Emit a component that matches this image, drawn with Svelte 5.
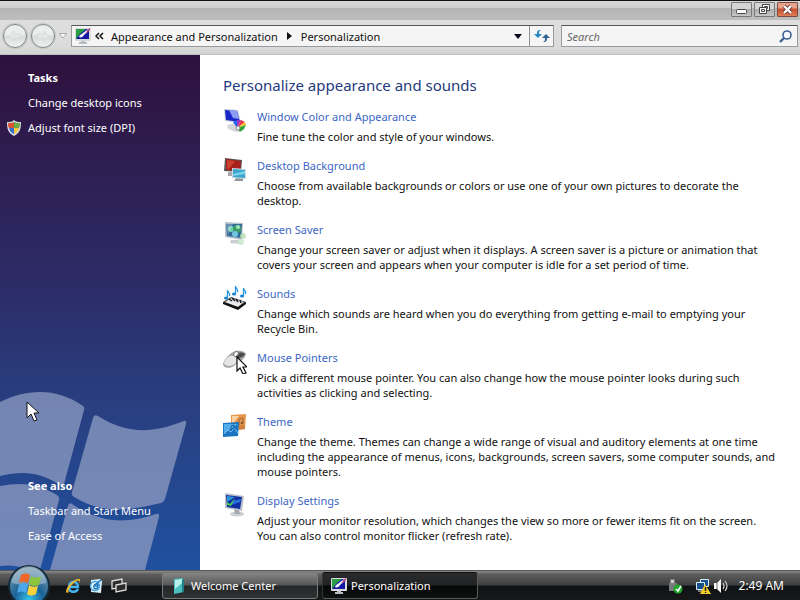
<script lang="ts">
  interface Item {
    icon: string;
    title: string;
    text: string;
  }

  const items: Item[] = [
    { icon: 'color', title: 'Window Color and Appearance', text: 'Fine tune the color and style of your windows.' },
    { icon: 'desktop', title: 'Desktop Background', text: 'Choose from available backgrounds or colors or use one of your own pictures to decorate the desktop.' },
    { icon: 'saver', title: 'Screen Saver', text: 'Change your screen saver or adjust when it displays. A screen saver is a picture or animation that covers your screen and appears when your computer is idle for a set period of time.' },
    { icon: 'sounds', title: 'Sounds', text: 'Change which sounds are heard when you do everything from getting e-mail to emptying your Recycle Bin.' },
    { icon: 'mouse', title: 'Mouse Pointers', text: 'Pick a different mouse pointer. You can also change how the mouse pointer looks during such activities as clicking and selecting.' },
    { icon: 'theme', title: 'Theme', text: 'Change the theme. Themes can change a wide range of visual and auditory elements at one time including the appearance of menus, icons, backgrounds, screen savers, some computer sounds, and mouse pointers.' },
    { icon: 'display', title: 'Display Settings', text: 'Adjust your monitor resolution, which changes the view so more or fewer items fit on the screen. You can also control monitor flicker (refresh rate).' },
  ];

  let search = $state('');
</script>

{#snippet monitor()}
  <svg width="16" height="16" viewBox="0 0 16 16">
    <path d="M6 12h4v2h2v2H4v-2h2z" fill="#b9bcc0" />
    <rect x="0" y="0" width="16" height="13" rx="1" fill="#d9dbde" />
    <rect x="1" y="1" width="13" height="10" fill="#1519a0" />
    <path d="M1 1h10L5 6 1 11z" fill="#2c9c45" />
    <path d="M4 9c1-3 2-2 4-4l5-4 1 1-5 5c-1 2-3 3-5 2z" fill="#f4f4ff" />
    <path d="M12 2l3-2v2l-4 4z" fill="#b04488" />
  </svg>
{/snippet}

{#snippet pointer()}
  <path d="M0 0v16l4-4 3 7 3-1-3-7h5z" fill="#fff" stroke="#111" stroke-width="1" stroke-linejoin="round" />
{/snippet}

{#snippet note(x: number, y: number)}
  <g transform="translate({x} {y})">
    <ellipse cx="2" cy="8" rx="2" ry="1.6" fill="#167fd0" />
    <path d="M3.5 8V0c0 3 3 2 2 6" fill="none" stroke="#2495e0" stroke-width="1.3" />
  </g>
{/snippet}

{#snippet itemIcon(name: string)}
  <svg class="item-icon" width="24" height="24" viewBox="0 0 24 24" aria-hidden="true">
    {#if name === 'color'}
      <path d="M1 0l14 1 3 13-16-2z" fill="#c5cbd8" />
      <path d="M2 1l12 1 3 11-14-2z" fill="#1928c8" />
      <path d="M6 1l8 1 2 8-6-1z" fill="#8d9cf4" />
      <path d="M4 16l8-2 6 8-5 1-8-3z" fill="#d5d7da" />
      <path d="M14 19l-4-6 4-2z" fill="#2467e8" />
      <path d="M14 19l0-8 4 0z" fill="#9c34c8" />
      <path d="M14 19l4-8 4 2z" fill="#e83450" />
      <path d="M14 19l8-6 1 3z" fill="#f5c22c" />
      <path d="M14 19l9-3-2 4-4 3z" fill="#29a538" />
      <circle cx="15" cy="19" r="2" fill="#fff" stroke="#888" />
    {:else if name === 'desktop'}
      <path d="M5 14h6v4H5z" fill="#a7a9ac" />
      <path d="M2 0l17 2-1 12-17-1z" fill="#5b5657" />
      <path d="M3 1l15 2-1 10-14-1z" fill="#a61f1b" />
      <path d="M4 2l8 1-6 8-2 0z" fill="#c9402c" />
      <path d="M13 20h7v3h-9z" fill="#8e999f" />
      <path d="M9 10l14 1v10l-14-1z" fill="#d2dbe0" />
      <path d="M10 11l12 1v8l-12-1z" fill="#3aa5cf" />
      <path d="M10 16l12-3v3l-12 2z" fill="#79d3e9" />
    {:else if name === 'saver'}
      <path d="M8 18l9 0 2 4-12-1z" fill="#c7cdd0" />
      <path d="M2 0l18 1-1 17-17-3z" fill="#b6c1c9" />
      <path d="M3 2l16 0-1 14-14-2z" fill="#356b9b" />
      <circle cx="8" cy="7" r="3" fill="#6ed1b0" />
      <circle cx="14" cy="7" r="4" fill="#3c9c67" />
      <circle cx="15" cy="5" r="2" fill="#9eeaba" />
      <circle cx="12" cy="12" r="3" fill="#72c7e0" />
      <circle cx="20" cy="14" r="3" fill="#b7dfb4" opacity=".8" />
      <circle cx="18" cy="20" r="3" fill="#cbead2" opacity=".9" />
      <path d="M3 2h7L5 13z" fill="#fff" opacity=".25" />
    {:else if name === 'sounds'}
      {@render note(1, 4)}
      {@render note(9, 0)}
      {@render note(17, 2)}
      <path d="M0 16l8-5 15 5-8 7z" fill="#33373b" />
      <path d="M2 16l6-4 13 4-6 5z" fill="#e9eaec" />
      <path d="M6 13l3 2m0-3l3 3m1-2l2 3m2-2l1 3" stroke="#17191b" stroke-width="1.5" />
      <path d="M0 16l15 5 8-5v2l-8 6-15-6z" fill="#111" />
    {:else if name === 'mouse'}
      <path d="M0 14C2 8 7 3 12 1c5-1 10 0 11 3-1 6-9 9-12 12-4 3-11 2-11-2z" fill="#a2a4a6" />
      <path d="M1 13c2-6 6-8 10-7 3 1 4 4 2 7-4 4-11 4-12 0z" fill="#e6e6e7" />
      <path d="M12 5c3-3 7-3 10-1-1 3-4 3-7 5z" fill="#4a4b4d" />
      <path d="M10 5l3-4 3 2-3 4z" fill="#f3f3f3" stroke="#777" />
      <g transform="translate(14 7)"><path d="M0 0v14l3-3 3 6 3-1-3-6h4z" fill="#fff" stroke="#111" stroke-width="1.2" /></g>
    {:else if name === 'theme'}
      <path d="M8 1l15-1-1 15-14 1z" fill="#e79548" />
      <path d="M9 2h7L9 11z" fill="#ffd3a1" />
      <path d="M16 11V5l4-1v5" fill="none" stroke="#a06a3a" />
      <circle cx="15" cy="11" r="1.3" fill="#7d5a45" />
      <circle cx="19" cy="9" r="1.3" fill="#7d5a45" />
      <path d="M0 9l16-1-1 14-15 1z" fill="#1974c2" />
      <path d="M1 10h14L1 19z" fill="#52aeea" />
      <path d="M1 20l4-4 3 2 3-4 4 5" fill="none" stroke="#7fc8f2" />
      <path d="M8 17v-5l3-1v5" fill="none" stroke="#1a5f9f" />
      <path d="M16 12l6-1v4l-6 1z" fill="#cf8040" />
    {:else}
      <ellipse cx="14" cy="21" rx="7" ry="2.5" fill="#cdd0d3" />
      <path d="M11 16l5 1 1 4-5 0z" fill="#a5a9ae" />
      <path d="M2 0l19 3-2 15-17-3z" fill="#b9c0c9" />
      <path d="M3 2l16 2-2 12-13-2z" fill="#102fa0" />
      <path d="M4 3l8 1-8 5z" fill="#2f92dc" />
      <path d="M9 8l9-2-1 3-9 3z" fill="#2b72e0" />
      <path d="M4 9l3 2 5-6-4 8-4-1z" fill="#50ce4b" />
    {/if}
  </svg>
{/snippet}

<div class="screen">
  <header class="titlebar">
    <button class="win-btn" aria-label="Minimize">
      <svg width="19" height="13"><rect x="4.5" y="6.5" width="10" height="4" rx="1" fill="#fff" stroke="#444" /></svg>
    </button>
    <button class="win-btn" aria-label="Restore">
      <svg width="19" height="13">
        <g fill="#fff" stroke="#444"><path d="M7.5 1.5h7v6h-7z" /><path d="M9.5 3.5h3v2h-3z" /><path d="M4.5 4.5h7v6h-7z" /><path d="M6.5 6.5h3v2h-3z" /></g>
      </svg>
    </button>
    <button class="win-btn close" aria-label="Close">
      <svg width="19" height="13">
        <path d="M6 3l7 7M13 3l-7 7" stroke="#673c3c" stroke-width="4" />
        <path d="M6 3l7 7M13 3l-7 7" stroke="#fff" stroke-width="2.4" />
      </svg>
    </button>
  </header>

  <nav class="toolbar">
    <div class="travel">
      <button class="round" aria-label="Back"><svg width="14" height="12"><path d="M6 1L1 6l5 5V8h7V4H6z" fill="#e4e7e7" stroke="#d7dada" /></svg></button>
      <button class="round" aria-label="Forward"><svg width="14" height="12"><path d="M8 1l5 5-5 5V8H1V4h7z" fill="#e4e7e7" stroke="#d7dada" /></svg></button>
      <button class="recent" aria-label="Recent pages"><svg width="8" height="6"><path d="M0.5 0.5h7L4 5z" fill="#fff" stroke="#aaa" /></svg></button>
    </div>
    <div class="address">
      {@render monitor()}
      <button class="crumb-arrow" aria-label="Previous locations">
        <svg width="9" height="8"><path d="M4 1L1 4l3 3M8 1L5 4l3 3" fill="none" stroke="#111" stroke-width="1.5" /></svg>
      </button>
      <a href="#appearance">Appearance and Personalization</a>
      <svg class="sep" width="5" height="8"><path d="M0 0l5 4-5 4z" fill="#111" /></svg>
      <a href="#personalization">Personalization</a>
      <button class="drop" aria-label="Address history"><svg width="8" height="5"><path d="M0 0h8L4 5z" fill="#050520" /></svg></button>
      <button class="refresh" aria-label="Refresh">
        <svg width="16" height="14" viewBox="0 0 16 14">
          <path d="M7 1C3 1 3 3 3 5H0l4 4 4-4H5c0-2 0-3 2-4z" fill="#2488c4" />
          <path d="M9 13c4 0 4-2 4-4h3l-4-4-4 4h3c0 2 0 3-2 4z" fill="#2f6295" />
        </svg>
      </button>
    </div>
    <label class="search">
      <input type="text" placeholder="Search" aria-label="Search" bind:value={search} />
      <svg width="13" height="13"><circle cx="8" cy="5" r="4" fill="#f4f8fc" stroke="#3c5f94" stroke-width="1.6" /><path d="M5 8l-4 4" stroke="#3c5f94" stroke-width="2.4" /></svg>
    </label>
  </nav>

  <div class="content">
    <aside class="sidebar">
      <svg class="flag" width="200" height="180" viewBox="0 390 200 180" aria-hidden="true">
        <g fill="#8494bd" fill-opacity=".83">
          <path d="M0 402C28 388 58 388 83 406q2 1 1 4L64 484q-1 3-4 1C39 471 21 471 0 476z" />
          <path d="M98 416C128 435 153 433 184 421q3-1 2 3L165 499q-1 3-4 4C128 511 102 514 74 497q-3-2-2-5L93 418q1-4 5-2z" />
          <path d="M0 486C21 482 37 483 57 495q3 2 2 5L40 570H27C17 565 9 565 0 566z" />
          <path d="M72 504C98 522 125 525 156 514q4-1 3 3L145 570H50L68 506q1-4 4-2z" />
        </g>
      </svg>
      <div class="links">
        <h2>Tasks</h2>
        <a href="#icons">Change desktop icons</a>
        <a class="shielded" href="#dpi">
          <svg width="14" height="16" viewBox="0 0 14 16">
            <path d="M7 0c2 2 4 2 7 2 0 7-1 11-7 14C1 13 0 9 0 2c3 0 5 0 7-2z" fill="#d5dae1" />
            <path d="M7 2v6H2C1 6 1 5 1 3c3 0 4 0 6-1z" fill="#d65530" />
            <path d="M7 2c2 1 3 1 6 1 0 2 0 3-1 5H7z" fill="#6bab43" />
            <path d="M2 8h5v6c-3-1-4-3-5-6z" fill="#356ed0" />
            <path d="M7 8h5c-1 3-2 5-5 6z" fill="#f5c83d" />
          </svg>
          <span>Adjust font size (DPI)</span>
        </a>
      </div>
      <div class="links">
        <h2>See also</h2>
        <a href="#taskbar">Taskbar and Start Menu</a>
        <a href="#ease">Ease of Access</a>
      </div>
      <svg class="cursor" width="14" height="22" viewBox="-1 -1 14 22">{@render pointer()}</svg>
    </aside>

    <main>
      <h1>Personalize appearance and sounds</h1>
      <ul>
        {#each items as item (item.title)}
          <li>
            {@render itemIcon(item.icon)}
            <div class="item-text">
              <a href="#{item.icon}">{item.title}</a>
              <p>{item.text}</p>
            </div>
          </li>
        {/each}
      </ul>
    </main>
  </div>

  <footer class="taskbar">
    <button class="start" aria-label="Start">
      <svg width="42" height="42" viewBox="0 0 42 42">
        <defs>
          <radialGradient id="orb" cx=".5" cy=".85" r=".8">
            <stop offset="0" stop-color="#37c6f0" />
            <stop offset=".45" stop-color="#1a6296" />
            <stop offset="1" stop-color="#7898ac" />
          </radialGradient>
        </defs>
        <circle cx="21" cy="21" r="20" fill="url(#orb)" stroke="#132b3b" stroke-width="2" />
        <path d="M4 18a17 17 0 0 1 34 0c-12 3-22 3-34 0z" fill="#d8e7ee" opacity=".4" />
        <path d="M13 10c4-2 6-2 9 0l-2 8c-3-2-6-2-9 0z" fill="#ee6728" />
        <path d="M23 11c3 2 6 2 10 0l-2 9c-4 2-7 1-10-1z" fill="#8cc63d" />
        <path d="M11 20c3-2 6-2 9 0l-2 8c-3-2-6-2-9 0z" fill="#4ba8ea" />
        <path d="M21 20c3 2 6 2 9 1l-2 8c-4 2-6 2-9 0z" fill="#fbd13c" />
      </svg>
    </button>
    <div class="quick">
      <button aria-label="Internet Explorer">
        <svg width="16" height="16" viewBox="0 0 16 16">
          <path d="M13 11c-2 4-9 4-9-2 0-7 9-7 9 0H5" fill="none" stroke="#45b3ef" stroke-width="2.5" />
          <path d="M2 15C-2 13 8 0 14 1c2 0 1 2 0 4 1-3-1-3-4-1C6 7 2 13 4 14z" fill="#eeb929" />
        </svg>
      </button>
      <button aria-label="Windows Mail">
        <svg width="16" height="16" viewBox="0 0 16 16">
          <path d="M3 2l9-1 2 2-1 12-10-1z" fill="#d9effd" />
          <circle cx="7" cy="8" r="4.5" fill="#eef9ff" stroke="#4aa3dd" stroke-width="1.5" />
          <path d="M10 9c-1 3-5 2-4-1 1-3 5-2 4 0H7M8 6l5-4" fill="none" stroke="#1674b7" stroke-width="1.5" />
        </svg>
      </button>
      <button aria-label="Switch between windows">
        <svg width="16" height="16" viewBox="0 0 16 16"><g fill="#292b2d" stroke="#dcdcdc" stroke-width="1.3"><path d="M1 3l10-2v8L1 11z" /><path d="M5 7l10-2v7L5 14z" /></g></svg>
      </button>
    </div>
    <button class="task">
      <svg width="16" height="16" viewBox="0 0 16 16"><path d="M3 1l9-1 1 14-10 2z" fill="#4cc0c0" /><path d="M4 2l7-1v4l-7 6z" fill="#b8f0e8" /><path d="M11 1l2 1v12l-2 0z" fill="#217d86" /></svg>
      <span>Welcome Center</span>
    </button>
    <button class="task active">
      {@render monitor()}
      <span>Personalization</span>
    </button>
    <div class="tray">
      <svg class="usb" width="16" height="16" viewBox="0 0 16 16">
        <path d="M3 1h5v4h2v8H2V5h1z" fill="#777b7d" /><path d="M4 2h3v3H4z" fill="#ccc" />
        <circle cx="11" cy="11" r="4.5" fill="#20a62d" /><path d="M9 11l2 2 3-5" fill="none" stroke="#fff" stroke-width="1.5" />
      </svg>
      <svg width="16" height="16" viewBox="0 0 16 16">
        <g fill="#174f8d" stroke="#d7edf9"><path d="M5.5 1.5h8v7h-8z" /><path d="M1.5 4.5h8v7h-8z" /></g><path d="M3 13h5" stroke="#d7edf9" />
        <path d="M10 6l6 10H5z" fill="#f4cc2a" /><path d="M10.5 9v4m0 1v1" stroke="#222" stroke-width="1.5" />
      </svg>
      <svg width="16" height="16" viewBox="0 0 16 16">
        <path d="M1 5h3l4-4v14l-4-4H1z" fill="#f7f7f7" /><path d="M4 5v6" stroke="#777" /><path d="M10 5q2 3 0 6M12 3q4 5 0 10" fill="none" stroke="#d5d5d5" stroke-width="1.2" />
      </svg>
      <time>2:49 AM</time>
    </div>
  </footer>
</div>

<style>
  :global(body) {
    margin: 0;
  }

  .screen {
    display: flex;
    flex-direction: column;
    min-height: 100vh;
    background: #fff;
    font-family: 'Noto Sans', 'Open Sans', sans-serif;
    font-size: 11px;
    line-height: 15px;
    color: #111;
  }

  button {
    display: flex;
    align-items: center;
    justify-content: center;
    padding: 0;
    border: 0;
    background: none;
    color: inherit;
    font: inherit;
  }

  a {
    color: inherit;
    text-decoration: none;
  }

  a:hover {
    text-decoration: underline;
  }

  svg {
    flex: none;
  }

  h1,
  h2,
  p,
  ul {
    margin: 0;
    padding: 0;
  }

  .titlebar {
    display: flex;
    justify-content: flex-end;
    gap: 2px;
    height: 20px;
    box-sizing: border-box;
    padding: 1px 2px 0 0;
    border-top: 1px solid #111;
    background: linear-gradient(#d8d8d8, #cecece 35%, #b5b5b5 36%, #bebebe);
  }

  .win-btn {
    width: 21px;
    height: 15px;
    border: 1px solid #77797a;
    border-radius: 1px;
    background: linear-gradient(#d4d4d4 45%, #aaa 46%, #c6c6c6);
  }

  .win-btn.close {
    border-color: #7b4a40;
    background: linear-gradient(#e8a28c 40%, #c74c2d 45%, #df8057);
  }

  .toolbar {
    display: flex;
    align-items: center;
    height: 35px;
    box-sizing: border-box;
    padding: 0 2px 2px 3px;
    border-bottom: 1px solid #bfc1c1;
    background: linear-gradient(#dedede, #dcdcdc 75%, #d2d3d3);
  }

  .travel {
    display: flex;
    align-items: center;
    gap: 4px;
    width: 68px;
  }

  .round {
    width: 24px;
    height: 24px;
    border: 1px solid #858989;
    border-radius: 50%;
    background: linear-gradient(#eceeee 45%, #d8dbdb 50%, #eff1f1);
    box-shadow: 0 0 0 1px #c3c6c6;
  }

  .address {
    display: flex;
    flex: 1;
    align-items: center;
    height: 22px;
    box-sizing: border-box;
    margin-right: 7px;
    padding-left: 3px;
    border: 1px solid #999c9e;
    border-top-color: #55585a;
    background: #f5f5f5;
  }

  .crumb-arrow {
    margin: 0 7px 0 4px;
  }

  .sep {
    margin: 0 9px;
  }

  .drop {
    width: 22px;
    height: 20px;
    margin-left: auto;
  }

  .refresh {
    width: 24px;
    height: 20px;
    border-left: 1px solid #8e9193;
  }

  .search {
    display: flex;
    align-items: center;
    width: 237px;
    height: 22px;
    box-sizing: border-box;
    padding: 0 5px;
    border: 1px solid #999c9e;
    border-top-color: #55585a;
    background: #f5f5f5;
  }

  .search input {
    flex: 1;
    min-width: 0;
    padding: 0;
    border: 0;
    outline: 0;
    background: none;
    font: inherit;
    font-style: italic;
  }

  .search input::placeholder {
    color: #666;
    opacity: 1;
  }

  .content {
    display: flex;
    flex: 1;
  }

  .sidebar {
    position: relative;
    display: flex;
    flex: none;
    flex-direction: column;
    justify-content: space-between;
    width: 200px;
    box-sizing: border-box;
    padding: 15px 8px 27px 7px;
    background: linear-gradient(#2e113d, #2e1d50 20%, #2c2c68 45%, #293f80 68%, #1f509f);
    color: #fff;
  }

  .flag {
    position: absolute;
    left: 0;
    bottom: 0;
  }

  .cursor {
    position: absolute;
    left: 26px;
    bottom: 147px;
  }

  .links {
    position: relative;
    display: flex;
    flex-direction: column;
    gap: 10px;
    padding-left: 21px;
  }

  h2 {
    font-size: 11px;
    font-weight: 700;
  }

  .shielded {
    display: flex;
    gap: 7px;
    height: 15px;
    margin-left: -21px;
  }

  main {
    flex: 1;
    min-width: 0;
    padding: 20px 24px 20px 23px;
  }

  h1 {
    margin-bottom: 14px;
    font-size: 15px;
    font-weight: 400;
    line-height: 20px;
    color: #1f3a7d;
  }

  ul {
    display: flex;
    flex-direction: column;
    gap: 14px;
    list-style: none;
  }

  li {
    display: flex;
    gap: 10px;
  }

  .item-text {
    display: flex;
    flex-direction: column;
    align-items: flex-start;
    gap: 5px;
  }

  .item-text a {
    color: #3c66c4;
  }

  .taskbar {
    display: flex;
    align-items: center;
    height: 30px;
    box-sizing: border-box;
    border-top: 1px solid #555;
    background: linear-gradient(#8c8c8c, #5c5c5c 12%, #3e3f40 48%, #101112 52%, #171819);
    color: #fff;
  }

  .start {
    position: relative;
    width: 42px;
    height: 30px;
    margin: 0 15px 0 8px;
  }

  .start svg {
    position: absolute;
    top: -6px;
  }

  .quick {
    display: flex;
    gap: 7px;
    width: 97px;
  }

  .task {
    justify-content: flex-start;
    gap: 4px;
    width: 156px;
    height: 27px;
    box-sizing: border-box;
    margin-right: 4px;
    padding: 0 8px;
    border: 1px solid #797979;
    border-radius: 3px;
    background: linear-gradient(#858585, #565758 48%, #252627 52%, #303132);
  }

  .task.active {
    border-color: #111 #5a5a5a #5a5a5a #333;
    background: linear-gradient(#292a2b, #222324 48%, #060707 52%, #101112);
  }

  .tray {
    display: flex;
    align-items: center;
    gap: 2px;
    margin-left: auto;
    padding-right: 16px;
    font-size: 12px;
  }

  .tray .usb {
    margin-right: 10px;
  }

  time {
    margin-left: 8px;
  }
</style>
